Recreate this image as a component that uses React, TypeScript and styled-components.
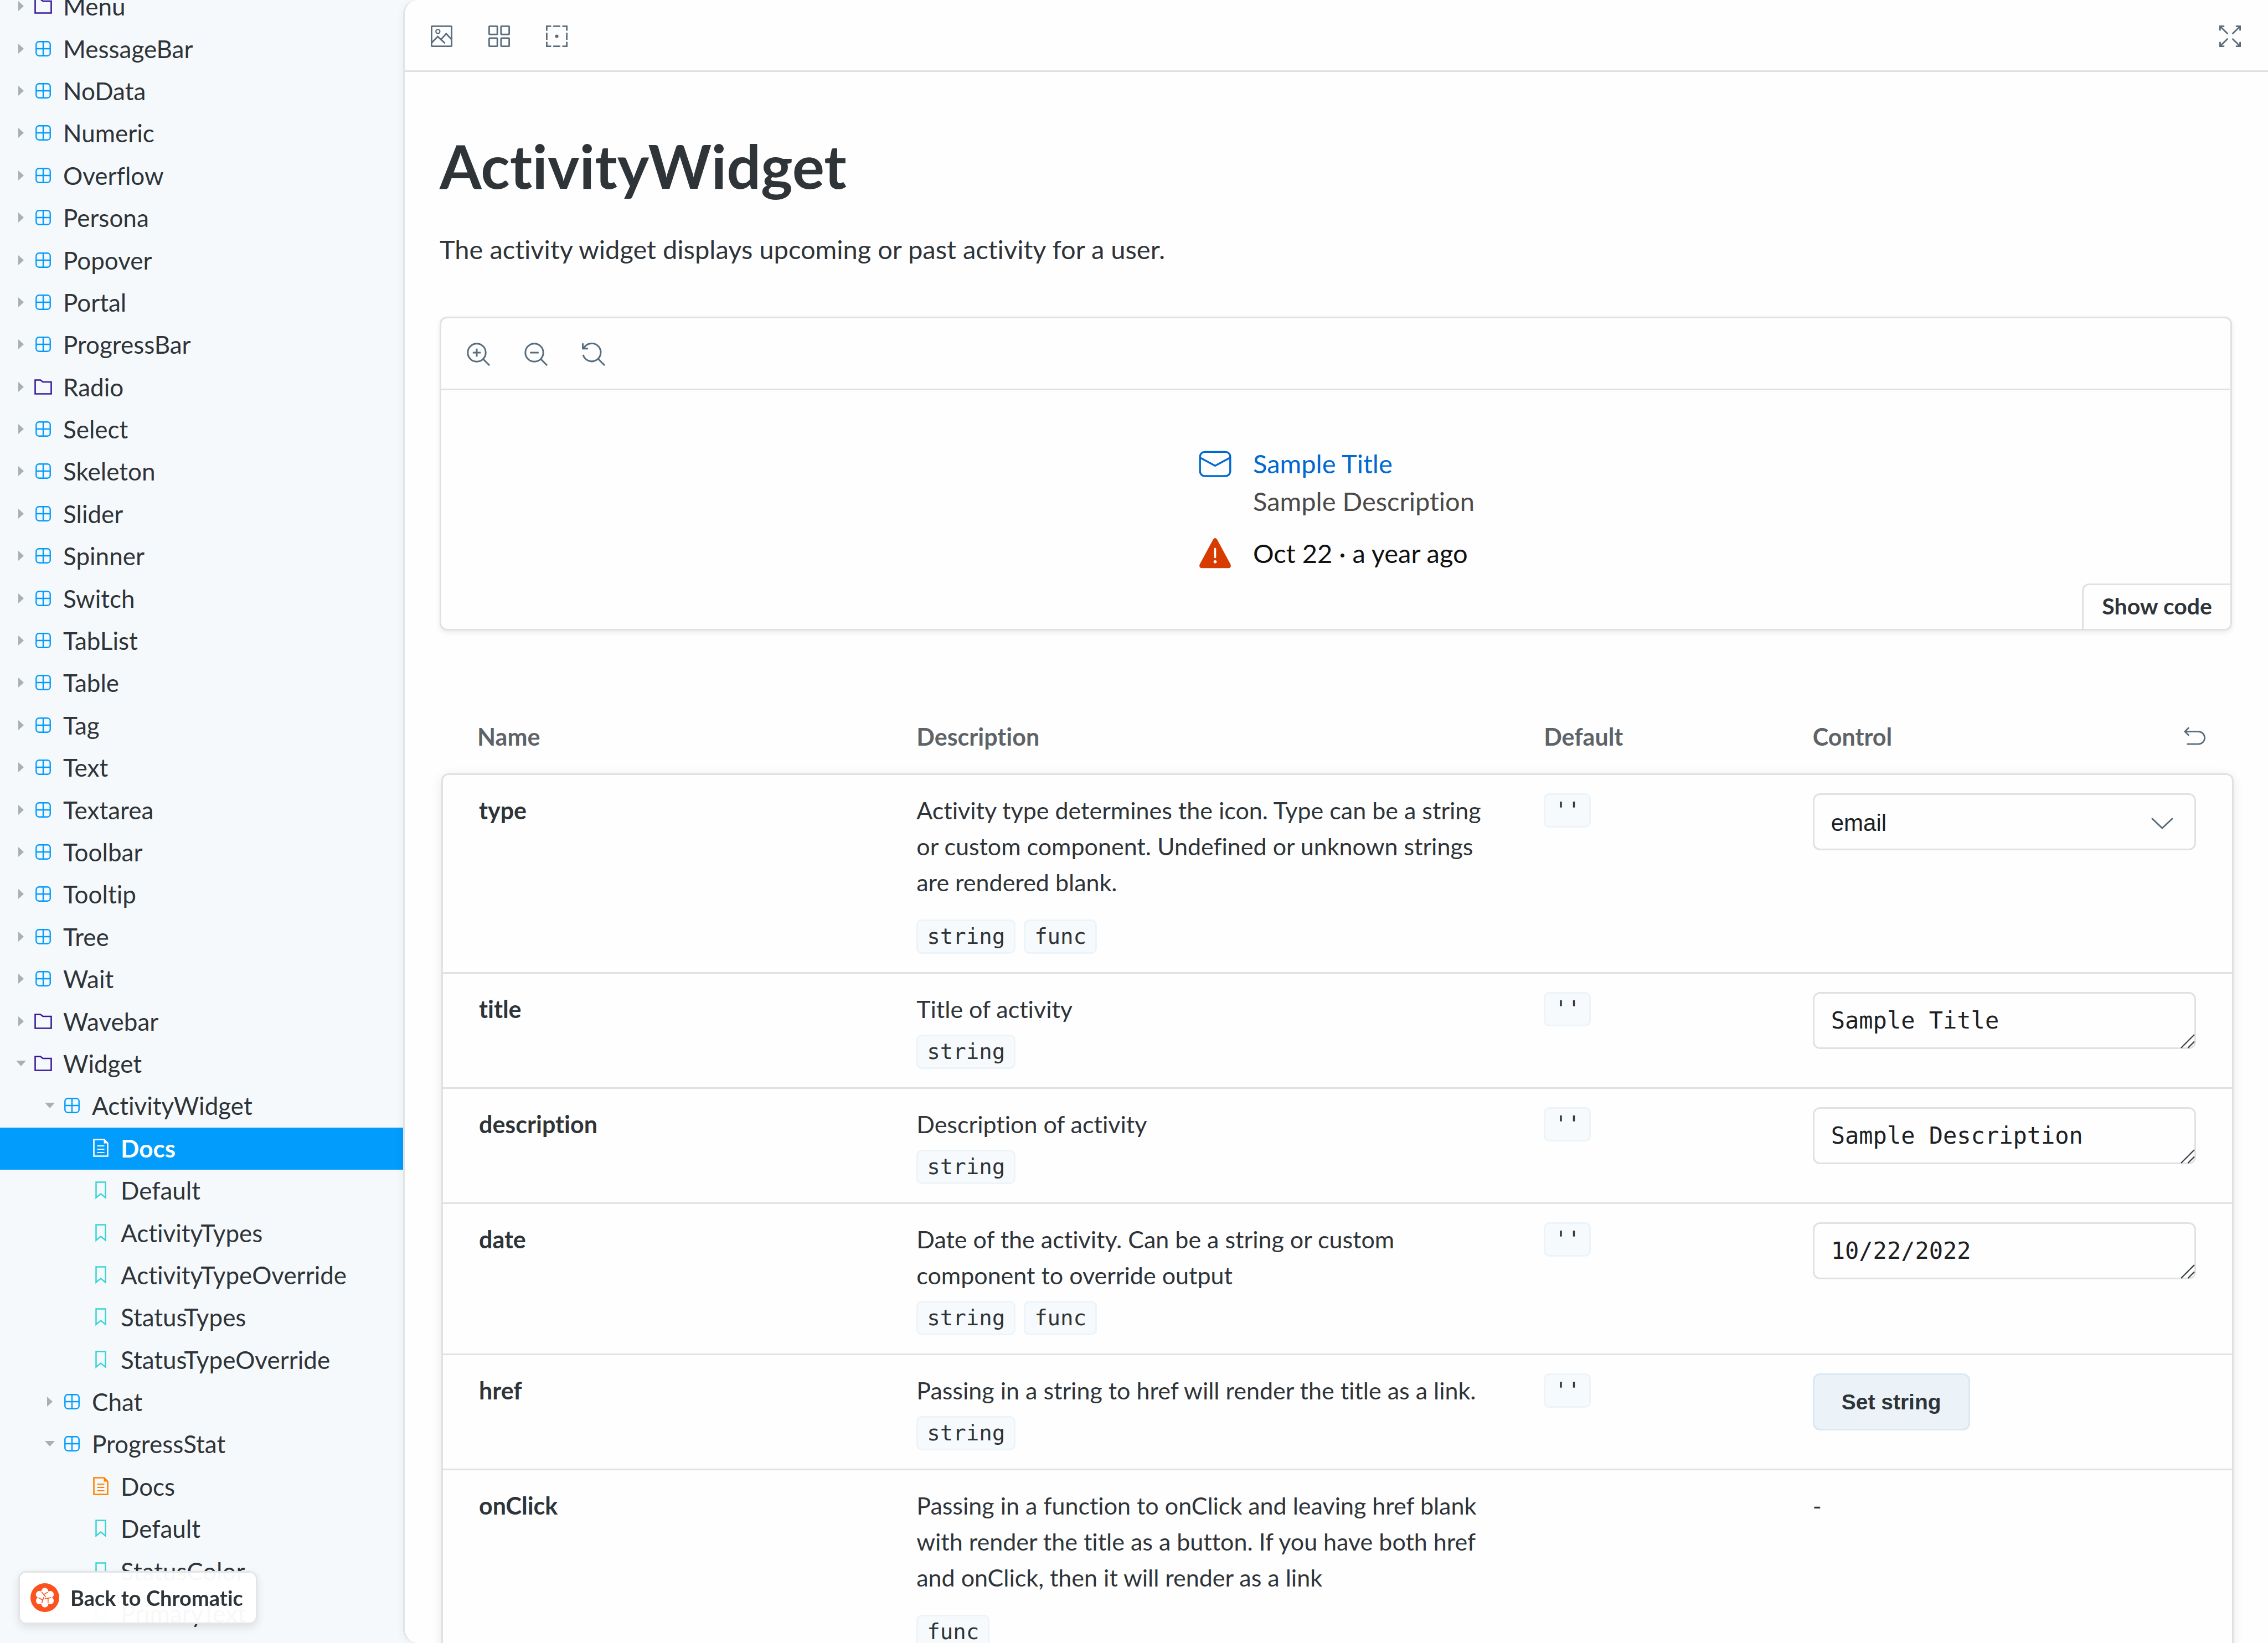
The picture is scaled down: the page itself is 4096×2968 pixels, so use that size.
import React, { ReactNode } from "react";
import styled, { createGlobalStyle, css } from "styled-components";

const sans = `Lato, "Open Sans", sans-serif`;
const mono = `"DejaVu Sans Mono", "Liberation Mono", monospace`;
const arial = `"Liberation Sans", Arial, sans-serif`;

const ink = "#2e3438";
const line = "#dee2e5";
const iconGrey = "#586c7b";

const GlobalStyle = createGlobalStyle`
  *, *::before, *::after { box-sizing: border-box; }
  body {
    margin: 0;
    background: #f6f9fc;
    color: ${ink};
    font-family: ${sans};
    font-size: 44px;
  }
  body, button, a { font-variant-ligatures: none; }
  button, select, textarea { margin: 0; color: inherit; }
`;

/* ---------- shell ---------- */

const Shell = styled.div`
  display: flex;
  height: 100vh;
  overflow: hidden;
`;

const Sidebar = styled.nav`
  display: flex;
  flex: 0 0 728px;
  flex-direction: column;
  padding-bottom: 15px;
  overflow: hidden;
`;

const Tree = styled.ul`
  display: flex;
  flex: 1;
  flex-direction: column;
  margin: -26px 0 0;
  padding: 0;
  list-style: none;
`;

const TreeItem = styled.li`
  display: flex;
  flex: 1 0 76px;
`;

const rowStyle = css<{ $depth: number; $selected?: boolean }>`
  display: flex;
  flex: 1;
  align-items: center;
  padding: 0 0 2px ${(p) => 26 + p.$depth * 52}px;
  border: 0;
  background: ${(p) => (p.$selected ? "#029cfd" : "transparent")};
  color: ${(p) => (p.$selected ? "#fff" : ink)};
  font-family: ${sans};
  font-size: 44px;
  font-weight: ${(p) => (p.$selected ? 700 : 400)};
  line-height: 60px;
  text-align: left;
  text-decoration: none;
  cursor: pointer;
`;

const BranchRow = styled.button<{ $depth: number }>`
  ${rowStyle}
`;

const LeafRow = styled.a<{ $depth: number; $selected?: boolean }>`
  ${rowStyle}
`;

const Twisty = styled.span`
  display: flex;
  flex: 0 0 24px;
  justify-content: center;
  margin-right: 12px;
`;

const KindSlot = styled.span`
  display: flex;
  flex: 0 0 32px;
  justify-content: center;
  margin-right: 20px;
`;

const BackLink = styled.a`
  position: fixed;
  bottom: 34px;
  left: 33px;
  display: flex;
  gap: 20px;
  align-items: center;
  height: 96px;
  padding: 0 23px 0 19px;
  border: 3px solid #e3e5e7;
  border-radius: 14px;
  background: rgba(255, 255, 255, 0.97);
  box-shadow: 0 6px 16px rgba(0, 0, 0, 0.1);
  color: ${ink};
  font-size: 38px;
  font-weight: 700;
  line-height: 52px;
  text-decoration: none;
`;

const Panel = styled.main`
  flex: 1;
  min-width: 0;
  overflow: hidden;
  border-left: 3px solid #e0e4e7;
  border-radius: 26px 0 0 26px;
  background: #fefefe;
  box-shadow: 0 3px 16px rgba(0, 0, 0, 0.06);
`;

/* ---------- toolbars ---------- */

const Toolbar = styled.div`
  display: flex;
  gap: 13px;
  align-items: center;
  height: 130px;
  padding: 3px 23px 0 21px;
  border-bottom: 3px solid ${line};
`;

const IconButton = styled.button`
  display: flex;
  align-items: center;
  justify-content: center;
  width: 91px;
  height: 91px;
  padding: 0;
  border: 0;
  background: none;
  color: ${iconGrey};
  cursor: pointer;
`;

const Spacer = styled.span`
  flex: 1;
`;

/* ---------- document ---------- */

const Doc = styled.article`
  padding: 110px 65px 0 63px;
`;

const Title = styled.h1`
  margin: 0 0 53px;
  font-size: 109px;
  font-weight: 700;
  line-height: 117px;
`;

const Lead = styled.p`
  margin: 0 0 82px;
  font-size: 47px;
  line-height: 80px;
`;

const Preview = styled.section`
  position: relative;
  margin-bottom: 125px;
  overflow: hidden;
  border: 3px solid ${line};
  border-radius: 13px;
  box-shadow: 0 4px 10px rgba(0, 0, 0, 0.08);
`;

const Story = styled.div`
  display: flex;
  justify-content: center;
  padding: 98px 98px 103px;
`;

const Activity = styled.div`
  display: grid;
  grid-template-columns: 65px auto;
  column-gap: 36px;
  align-items: center;
  font-size: 47px;
  line-height: 68px;
`;

const ActivityLink = styled.a`
  color: #0069d1;
  text-decoration: none;
`;

const ActivityText = styled.span`
  grid-column: 2;
  color: #4c4a48;
`;

const ActivityDate = styled.span`
  color: #111;
`;

const StatusRow = styled.div`
  display: grid;
  grid-column: 1 / -1;
  grid-template-columns: subgrid;
  align-items: center;
  margin-top: 26px;
`;

const ShowCode = styled.button`
  position: absolute;
  right: 0;
  bottom: 0;
  padding: 12px 33px 15px;
  border: 3px solid ${line};
  border-width: 3px 0 0 3px;
  border-radius: 13px 0 0 0;
  background: #fefefe;
  font-family: ${sans};
  font-size: 41px;
  font-weight: 700;
  line-height: 52px;
  cursor: pointer;
`;

/* ---------- args table ---------- */

const ArgsFrame = styled.div`
  margin-right: -3px;
  padding-left: 3px;
`;

const ArgsTable = styled.table`
  width: 100%;
  border-spacing: 0;
  table-layout: fixed;
  font-size: 43px;
  line-height: 65px;
`;

const Col = styled.col<{ $share: number }>`
  width: ${(p) => p.$share}%;
`;

const HeadCell = styled.th`
  padding: 34px 51px 34px 49px;
  color: #5d6367;
  font-weight: 700;
  text-align: left;

  &:first-child { padding-left: 65px; }
`;

const HeadSplit = styled.span`
  display: flex;
  align-items: center;
  justify-content: space-between;
`;

const ResetButton = styled(IconButton)`
  width: 39px;
  height: 39px;
`;

const Body = styled.tbody`
  border-radius: 13px;
  box-shadow: 0 4px 20px rgba(0, 0, 0, 0.09);
`;

const Cell = styled.td<{ $raised?: boolean }>`
  padding: ${(p) => (p.$raised ? 33 : 31)}px 49px 33px;
  border-top: 3px solid ${line};
  background: #fefefe;
  vertical-align: top;

  &:first-child {
    padding-left: 65px;
    border-left: 3px solid ${line};
  }

  &:last-child {
    padding-right: 65px;
    border-right: 3px solid ${line};
  }

  tr:first-child > &:first-child { border-top-left-radius: 13px; }
  tr:first-child > &:last-child { border-top-right-radius: 13px; }
`;

const ArgName = styled.label`
  font-weight: 700;
`;

const TagRow = styled.div<{ $loose?: boolean }>`
  display: flex;
  gap: 15px;
  margin-top: ${(p) => (p.$loose ? 35 : 14)}px;
`;

const Tag = styled.code`
  display: block;
  width: fit-content;
  padding: 0 16px;
  border: 3px solid #ecf4f9;
  border-radius: 10px;
  background: #f7fafc;
  font: 39px/56px ${mono};
`;

const ControlBox = styled.div`
  position: relative;
  display: flex;
`;

const fieldStyle = css`
  display: block;
  width: 100%;
  height: 103px;
  border: 3px solid ${line};
  border-radius: 13px;
  background: #fefefe;
  color: #1d2124;
`;

const SelectField = styled.select`
  ${fieldStyle}
  appearance: none;
  padding: 22px 30px 18px;
  font: 42px/57px ${arial};
`;

const TextField = styled.textarea`
  ${fieldStyle}
  overflow: hidden;
  padding: 20px 30px;
  resize: none;
  font: 42px/57px ${mono};
`;

const ChevronOverlay = styled.span`
  position: absolute;
  top: 43px;
  right: 40px;
  display: flex;
  pointer-events: none;
`;

const GripOverlay = styled.span`
  position: absolute;
  right: 2px;
  bottom: 1px;
  display: flex;
  pointer-events: none;
`;

const SetButton = styled.button`
  height: 103px;
  padding: 0 49px;
  border: 3px solid #d9e8f2;
  border-radius: 13px;
  background: #ecf3f8;
  font: 700 39px/52px ${arial};
  cursor: pointer;
`;

/* ---------- icons ---------- */

const Glyph = ({ size = 39, children }: { size?: number; children: ReactNode }) => (
  <svg width={size} height={size} viewBox="0 0 14 14" fill="none" stroke="currentColor" strokeWidth="1" aria-hidden="true">
    {children}
  </svg>
);

const PhotoIcon = () => (
  <Glyph>
    <rect x="0.5" y="0.5" width="13" height="13" rx="0.3" />
    <circle cx="4.6" cy="3.9" r="1.3" strokeWidth="0.8" />
    <path d="M0.6 11.2L4.5 7.2L9.2 11.6M6.6 9.1L10 5.3L13.4 9" />
  </Glyph>
);

const GridIcon = () => (
  <Glyph>
    <rect x="0.5" y="0.5" width="5.3" height="5.3" rx="0.3" />
    <rect x="8.2" y="0.5" width="5.3" height="5.3" rx="0.3" />
    <rect x="0.5" y="8.2" width="5.3" height="5.3" rx="0.3" />
    <rect x="8.2" y="8.2" width="5.3" height="5.3" rx="0.3" />
  </Glyph>
);

const OutlineIcon = () => (
  <Glyph>
    <path d="M3.4 0.5H0.5V3.4M4.7 0.5H9.3M10.6 0.5H13.5V3.4M13.5 4.7V9.3M13.5 10.6V13.5H10.6M9.3 13.5H4.7M3.4 13.5H0.5V10.6M0.5 9.3V4.7" />
    <circle cx="7" cy="7" r="1.1" fill="currentColor" stroke="none" />
  </Glyph>
);

const ExpandIcon = () => (
  <Glyph>
    <path d="M0.5 3.3V0.5H3.3M0.7 0.7L5.5 5.5M10.7 0.5H13.5V3.3M13.3 0.7L8.5 5.5M0.5 10.7V13.5H3.3M0.7 13.3L5.5 8.5M10.7 13.5H13.5V10.7M13.3 13.3L8.5 8.5" />
  </Glyph>
);

const ZoomInIcon = () => (
  <Glyph size={42}>
    <circle cx="6" cy="6" r="5.4" />
    <path d="M9.9 9.9L13.7 13.7M3.6 6H8.4M6 3.6V8.4" />
  </Glyph>
);

const ZoomOutIcon = () => (
  <Glyph size={42}>
    <circle cx="6" cy="6" r="5.4" />
    <path d="M9.9 9.9L13.7 13.7M3.4 6H8.6" />
  </Glyph>
);

const ZoomResetIcon = () => (
  <Glyph size={42}>
    <path d="M0.5 0.4V3.6H3.7M1 3.6A5.4 5.4 0 1 1 0.7 7.3M9.9 9.9L13.7 13.7" />
  </Glyph>
);

const UndoIcon = () => (
  <Glyph>
    <path d="M3.3 1.2L0.7 3.8L3.3 6.4M0.8 3.8H9.5A4 4 0 0 1 9.5 11.9H2" />
  </Glyph>
);

const FolderIcon = () => (
  <svg width="32" height="28" viewBox="0 0 32 28" fill="none" stroke="#37189a" strokeWidth="2.6" aria-hidden="true">
    <path d="M1.5 1.5H11L15.5 5H30.5V26.5H1.5Z" />
  </svg>
);

const ComponentIcon = () => (
  <svg width="28" height="28" viewBox="0 0 28 28" fill="none" stroke="#029cfd" strokeWidth="2.4" aria-hidden="true">
    <rect x="1.3" y="1.3" width="25.4" height="25.4" rx="5" />
    <path d="M14 1.5V26.5M1.5 14H26.5" />
  </svg>
);

const DocIcon = ({ color }: { color: string }) => (
  <svg width="28" height="33" viewBox="0 0 28 33" fill="none" stroke={color} strokeWidth="2.6" aria-hidden="true">
    <path d="M1.5 1.5H20L26.5 8V31.5H1.5Z" />
    <path d="M19.5 1.5V8.5H26.5Z" fill={color} stroke="none" />
    <path d="M7.5 13H20.5M7.5 19H20.5M7.5 25H20.5" strokeWidth="2.2" />
  </svg>
);

const BookmarkIcon = () => (
  <svg width="20" height="32" viewBox="0 0 20 32" fill="none" stroke="#37d5d3" strokeWidth="2.5" aria-hidden="true">
    <path d="M1.5 1.5H18.5V29.5L10 22.5L1.5 29.5Z" />
  </svg>
);

const Triangle = ({ open }: { open: boolean }) => (
  <svg width="18" height="18" viewBox="0 0 18 18" fill="#a9b0b4" aria-hidden="true">
    <path d={open ? "M0 4H18L9 14Z" : "M4 0L14 9L4 18Z"} />
  </svg>
);

const MailIcon = () => (
  <svg width="65" height="65" viewBox="0 0 20 20" fill="none" stroke="#0069d1" strokeWidth="1.05" aria-hidden="true">
    <rect x="1.6" y="3.5" width="16.8" height="13.4" rx="2.6" />
    <path d="M1.8 6.8L10 11.2L18.2 6.8" />
  </svg>
);

const WarningIcon = () => (
  <svg width="65" height="65" viewBox="0 0 20 20" aria-hidden="true">
    <path d="M8.9 2.3Q10 0.8 11.1 2.3L18.6 16.2Q19.1 18.1 17.4 18.2H2.6Q0.9 18.1 1.4 16.2Z" fill="#d83b01" />
    <path d="M10 7.5V12.2" stroke="#fff" strokeWidth="1.1" strokeLinecap="round" />
    <circle cx="10" cy="14.7" r="0.85" fill="#fff" />
  </svg>
);

const ChevronIcon = () => (
  <svg width="42" height="24" viewBox="0 0 42 24" fill="none" stroke={iconGrey} strokeWidth="3" strokeLinecap="round" aria-hidden="true">
    <path d="M3 3L21 20L39 3" />
  </svg>
);

const GripIcon = () => (
  <svg width="26" height="26" viewBox="0 0 26 26" fill="none" stroke="#3c4043" strokeWidth="2.4" aria-hidden="true">
    <path d="M1 25L25 1M13.5 25L25 13.5" />
  </svg>
);

const ChromaticLogo = () => (
  <svg width="52" height="52" viewBox="0 0 32 32" aria-hidden="true">
    <circle cx="16" cy="16" r="16" fill="#fc521f" />
    <circle cx="16" cy="16" r="7" fill="#fff" />
    {[0, 60, 120, 180, 240, 300].map((a) => (
      <circle key={a} cx="16" cy="9" r="3.9" fill="#fff" transform={`rotate(${a} 16 16)`} />
    ))}
    {[0, 120, 240].map((a) => (
      <path
        key={a}
        d="M12.5 9.9L17 15.4M19.5 9.9L14.6 12.6"
        fill="none"
        stroke="#fc521f"
        strokeWidth="1"
        transform={`rotate(${a} 16 16)`}
      />
    ))}
  </svg>
);

/* ---------- data ---------- */

type Kind = "folder" | "component" | "docs" | "story";
type Node = { label: string; kind: Kind; depth: number; open?: boolean; selected?: boolean };

const component = (label: string, depth = 0, open = false): Node => ({ label, kind: "component", depth, open });
const folder = (label: string, open = false): Node => ({ label, kind: "folder", depth: 0, open });
const docs = (selected = false): Node => ({ label: "Docs", kind: "docs", depth: 2, selected });
const story = (label: string): Node => ({ label, kind: "story", depth: 2 });

const nodes: Node[] = [
  folder("Menu"),
  ...["MessageBar", "NoData", "Numeric", "Overflow", "Persona", "Popover", "Portal", "ProgressBar"].map((n) => component(n)),
  folder("Radio"),
  ...[
    "Select", "Skeleton", "Slider", "Spinner", "Switch", "TabList", "Table",
    "Tag", "Text", "Textarea", "Toolbar", "Tooltip", "Tree", "Wait",
  ].map((n) => component(n)),
  folder("Wavebar"),
  folder("Widget", true),
  component("ActivityWidget", 1, true),
  docs(true),
  ...["Default", "ActivityTypes", "ActivityTypeOverride", "StatusTypes", "StatusTypeOverride"].map(story),
  component("Chat", 1),
  component("ProgressStat", 1, true),
  docs(),
  ...["Default", "StatusColor", "PrimaryText"].map(story),
];

type Control = { type: "select" | "text"; value: string } | { type: "set" } | { type: "none" };
type Arg = { name: string; text: string; tags: string[]; loose?: boolean; fallback?: string; control: Control };

const args: Arg[] = [
  {
    name: "type",
    text: "Activity type determines the icon. Type can be a string or custom component. Undefined or unknown strings are rendered blank.",
    tags: ["string", "func"],
    loose: true,
    fallback: "''",
    control: { type: "select", value: "email" },
  },
  { name: "title", text: "Title of activity", tags: ["string"], fallback: "''", control: { type: "text", value: "Sample Title" } },
  {
    name: "description",
    text: "Description of activity",
    tags: ["string"],
    fallback: "''",
    control: { type: "text", value: "Sample Description" },
  },
  {
    name: "date",
    text: "Date of the activity. Can be a string or custom component to override output",
    tags: ["string", "func"],
    fallback: "''",
    control: { type: "text", value: "10/22/2022" },
  },
  {
    name: "href",
    text: "Passing in a string to href will render the title as a link.",
    tags: ["string"],
    fallback: "''",
    control: { type: "set" },
  },
  {
    name: "onClick",
    text: "Passing in a function to onClick and leaving href blank with render the title as a button. If you have both href and onClick, then it will render as a link",
    tags: ["func"],
    loose: true,
    control: { type: "none" },
  },
];

/* ---------- parts ---------- */

const KindIcon = ({ node }: { node: Node }) => {
  if (node.kind === "folder") return <FolderIcon />;
  if (node.kind === "component") return <ComponentIcon />;
  if (node.kind === "docs") return <DocIcon color={node.selected ? "#fff" : "#ff8300"} />;
  return <BookmarkIcon />;
};

const TreeRow = ({ node }: { node: Node }) => {
  const branch = node.kind === "folder" || node.kind === "component";
  const content = (
    <>
      <Twisty>{branch && <Triangle open={!!node.open} />}</Twisty>
      <KindSlot>
        <KindIcon node={node} />
      </KindSlot>
      {node.label}
    </>
  );
  return (
    <TreeItem>
      {branch ? (
        <BranchRow type="button" $depth={node.depth} aria-expanded={!!node.open}>
          {content}
        </BranchRow>
      ) : (
        <LeafRow href="#" $depth={node.depth} $selected={node.selected}>
          {content}
        </LeafRow>
      )}
    </TreeItem>
  );
};

const ControlField = ({ arg }: { arg: Arg }) => {
  const id = `control-${arg.name}`;
  const { control } = arg;
  if (control.type === "select") {
    return (
      <ControlBox>
        <SelectField id={id} defaultValue={control.value}>
          <option>{control.value}</option>
        </SelectField>
        <ChevronOverlay>
          <ChevronIcon />
        </ChevronOverlay>
      </ControlBox>
    );
  }
  if (control.type === "text") {
    return (
      <ControlBox>
        <TextField id={id} rows={1} defaultValue={control.value} />
        <GripOverlay>
          <GripIcon />
        </GripOverlay>
      </ControlBox>
    );
  }
  if (control.type === "set") {
    return (
      <ControlBox>
        <SetButton type="button" id={id}>
          Set string
        </SetButton>
      </ControlBox>
    );
  }
  return <>-</>;
};

const ArgRow = ({ arg }: { arg: Arg }) => (
  <tr>
    <Cell>
      {arg.control.type === "none" ? (
        <ArgName as="strong">{arg.name}</ArgName>
      ) : (
        <ArgName htmlFor={`control-${arg.name}`}>{arg.name}</ArgName>
      )}
    </Cell>
    <Cell>
      {arg.text}
      <TagRow $loose={arg.loose}>
        {arg.tags.map((t) => (
          <Tag key={t}>{t}</Tag>
        ))}
      </TagRow>
    </Cell>
    <Cell $raised>{arg.fallback && <Tag>{arg.fallback}</Tag>}</Cell>
    <Cell $raised={arg.control.type !== "none"}>
      <ControlField arg={arg} />
    </Cell>
  </tr>
);

export default function App() {
  return (
    <>
      <GlobalStyle />
      <Shell>
        <Sidebar aria-label="Stories">
          <Tree>
            {nodes.map((node, i) => (
              <TreeRow key={i} node={node} />
            ))}
          </Tree>
        </Sidebar>
        <Panel>
          <Toolbar>
            <IconButton type="button" aria-label="Change background"><PhotoIcon /></IconButton>
            <IconButton type="button" aria-label="Apply grid"><GridIcon /></IconButton>
            <IconButton type="button" aria-label="Apply outlines"><OutlineIcon /></IconButton>
            <Spacer />
            <IconButton type="button" aria-label="Go full screen"><ExpandIcon /></IconButton>
          </Toolbar>
          <Doc>
            <Title>ActivityWidget</Title>
            <Lead>The activity widget displays upcoming or past activity for a user.</Lead>
            <Preview>
              <Toolbar>
                <IconButton type="button" aria-label="Zoom in"><ZoomInIcon /></IconButton>
                <IconButton type="button" aria-label="Zoom out"><ZoomOutIcon /></IconButton>
                <IconButton type="button" aria-label="Reset zoom"><ZoomResetIcon /></IconButton>
              </Toolbar>
              <Story>
                <Activity>
                  <MailIcon />
                  <ActivityLink href="#">Sample Title</ActivityLink>
                  <ActivityText>Sample Description</ActivityText>
                  <StatusRow>
                    <WarningIcon />
                    <ActivityDate>Oct 22 · a year ago</ActivityDate>
                  </StatusRow>
                </Activity>
              </Story>
              <ShowCode type="button">Show code</ShowCode>
            </Preview>
            <ArgsFrame>
              <ArgsTable>
                <colgroup>
                  <Col $share={25} />
                  <Col $share={35} />
                  <Col $share={15} />
                  <Col $share={25} />
                </colgroup>
                <thead>
                  <tr>
                    <HeadCell>Name</HeadCell>
                    <HeadCell>Description</HeadCell>
                    <HeadCell>Default</HeadCell>
                    <HeadCell>
                      <HeadSplit>
                        Control
                        <ResetButton type="button" aria-label="Reset controls"><UndoIcon /></ResetButton>
                      </HeadSplit>
                    </HeadCell>
                  </tr>
                </thead>
                <Body>
                  {args.map((arg) => (
                    <ArgRow key={arg.name} arg={arg} />
                  ))}
                </Body>
              </ArgsTable>
            </ArgsFrame>
          </Doc>
        </Panel>
      </Shell>
      <BackLink href="#">
        <ChromaticLogo />
        Back to Chromatic
      </BackLink>
    </>
  );
}
